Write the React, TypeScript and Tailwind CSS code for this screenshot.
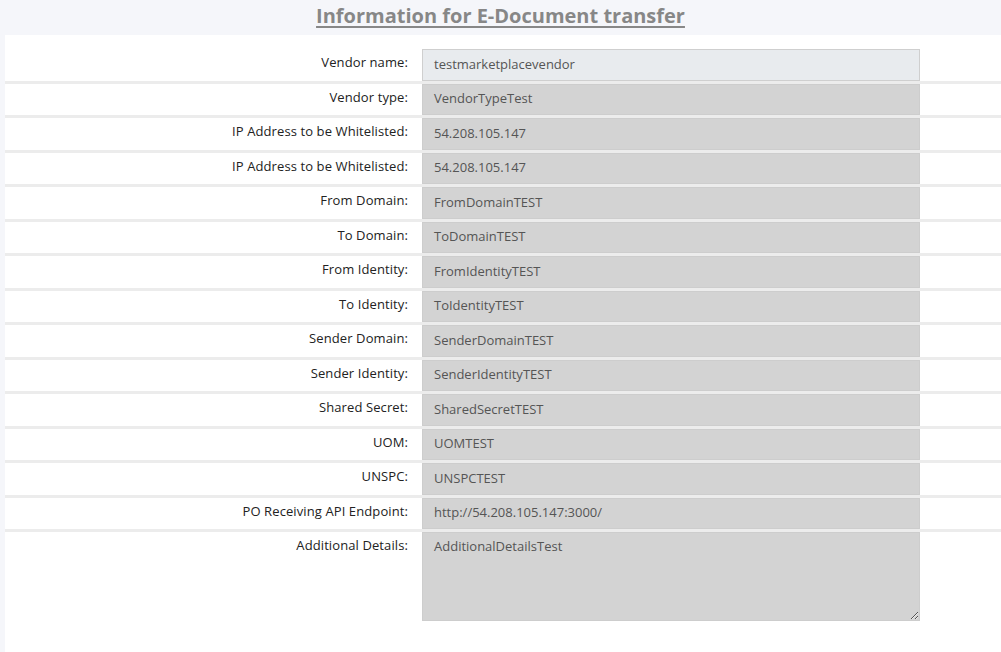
import React from "react";

const rows: [string, string][] = [
  ["Vendor type:", "VendorTypeTest"],
  ["IP Address to be Whitelisted:", "54.208.105.147"],
  ["IP Address to be Whitelisted:", "54.208.105.147"],
  ["From Domain:", "FromDomainTEST"],
  ["To Domain:", "ToDomainTEST"],
  ["From Identity:", "FromIdentityTEST"],
  ["To Identity:", "ToIdentityTEST"],
  ["Sender Domain:", "SenderDomainTEST"],
  ["Sender Identity:", "SenderIdentityTEST"],
  ["Shared Secret:", "SharedSecretTEST"],
  ["UOM:", "UOMTEST"],
  ["UNSPC:", "UNSPCTEST"],
  ["PO Receiving API Endpoint:", "http://54.208.105.147:3000/"],
];

const font = { fontFamily: '"Open Sans", "Noto Sans", sans-serif' };

export default function App() {
  return (
    <div className="min-h-screen bg-[#f5f6fa]" style={font}>
      <h2 className="h-[35px] pt-[2px] text-center text-[20px] leading-[28px] font-bold text-[#878787] underline decoration-[1.5px] underline-offset-[3px]">
        Information for E-Document transfer
      </h2>
      <div className="ml-[5px] bg-white pt-[14px] pb-[31px]">
        <div className="flex border-b-[3px] border-[#ececec]">
          <label className="w-[403px] shrink-0 pt-[4px] text-right text-[13px] leading-[19.5px] tracking-[0.1px] text-[#222]">
            Vendor name:
          </label>
          <div className="ml-[14px] h-[31.5px] w-[498px] border border-[#cfcfcf] bg-[#e8ebee] px-[11px] py-[4.5px] text-[13px] leading-[19.5px] text-[#555]">
            testmarketplacevendor
          </div>
        </div>
        {rows.map(([l, v], i) => (
          <div key={i} className="flex border-b-[3px] border-[#ececec]">
            <label className="w-[403px] shrink-0 pt-[4px] text-right text-[13px] leading-[19.5px] tracking-[0.1px] text-[#222]">
              {l}
            </label>
            <div className="ml-[14px] h-[31.5px] w-[498px] border border-[#cdcdcd] bg-[#d3d3d3] px-[11px] py-[4.5px] text-[13px] leading-[19.5px] text-[#555]">
              {v}
            </div>
          </div>
        ))}
        <div className="flex">
          <label className="w-[403px] shrink-0 pt-[4px] text-right text-[13px] leading-[19.5px] tracking-[0.1px] text-[#222]">
            Additional Details:
          </label>
          <textarea
            readOnly
            defaultValue="AdditionalDetailsTest"
            className="ml-[14px] h-[89px] w-[498px] border border-[#cdcdcd] bg-[#d3d3d3] px-[11px] py-[4px] text-[13px] leading-[19.5px] text-[#555] outline-none"
            style={font}
          />
        </div>
      </div>
    </div>
  );
}
